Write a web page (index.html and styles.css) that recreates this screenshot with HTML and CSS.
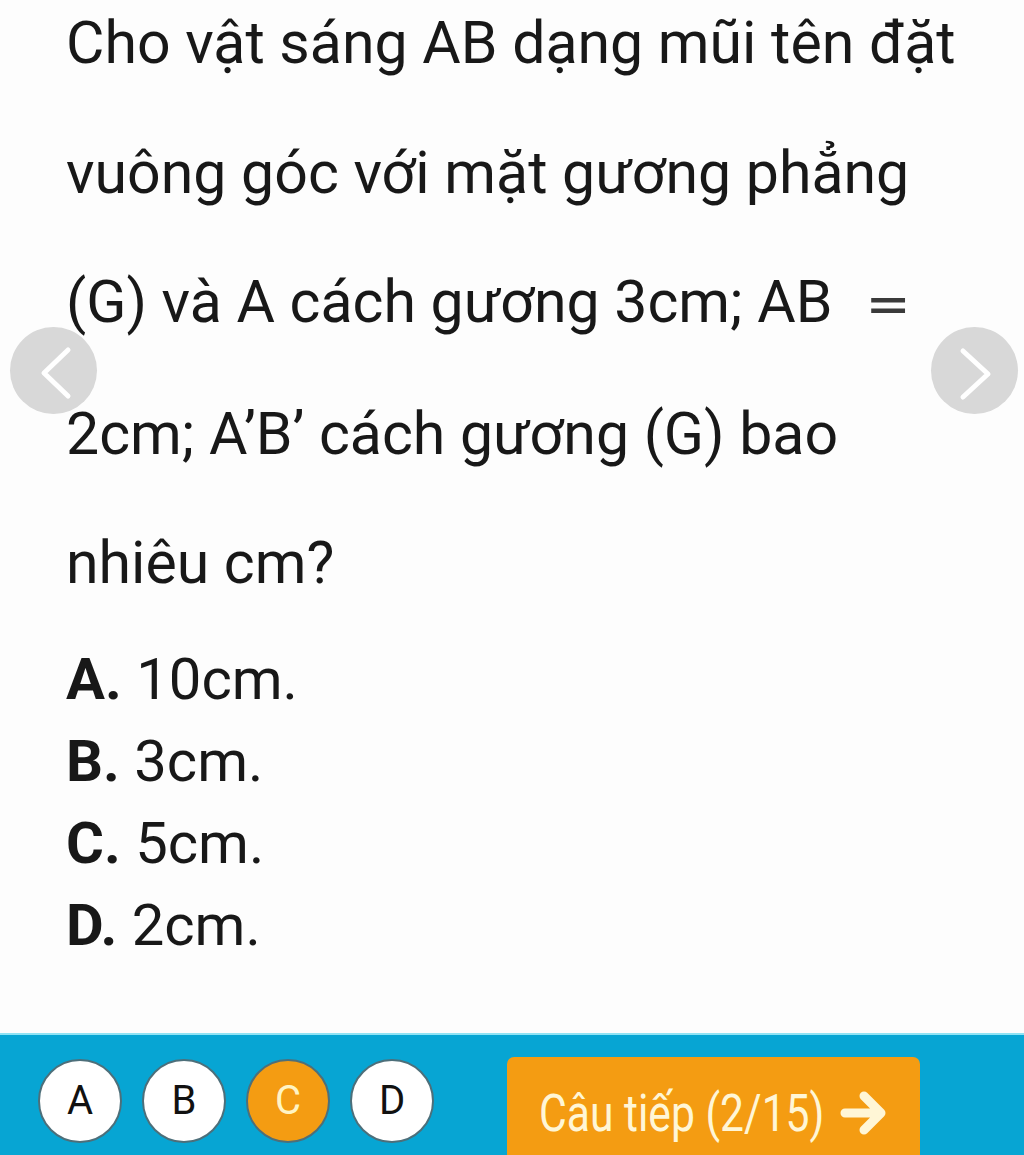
FILE: index.html
```html
<!DOCTYPE html>
<html lang="vi">
<head>
    <meta charset="UTF-8">
    <meta name="viewport" content="width=device-width, initial-scale=1.0">
    <title>Câu hỏi trắc nghiệm</title>
    <link rel="stylesheet" href="styles.css">
</head>
<body>
    <div class="quiz">
        <p class="question">
            Cho vật sáng AB dạng mũi tên đặt<br>
            vuông góc với mặt gương phẳng<br>
            (G) và A cách gương 3cm; AB<span class="eq">=</span><br>
            2cm; A’B’ cách gương (G) bao<br>
            nhiêu cm?
        </p>

        <ul class="answers">
            <li><b>A.</b> 10cm.</li>
            <li><b>B.</b> 3cm.</li>
            <li><b>C.</b> 5cm.</li>
            <li><b>D.</b> 2cm.</li>
        </ul>

        <button class="nav-btn prev" aria-label="Câu trước">
            <svg viewBox="0 0 87 87" width="87" height="87"><polyline points="58,23 34,46 58,69"/></svg>
        </button>
        <button class="nav-btn next" aria-label="Câu sau">
            <svg viewBox="0 0 87 87" width="87" height="87"><polyline points="32,24 57,47 32,70"/></svg>
        </button>
    </div>

    <div class="answer-bar">
        <div class="choices">
            <span class="choice">A</span>
            <span class="choice">B</span>
            <span class="choice selected">C</span>
            <span class="choice">D</span>
        </div>
        <button class="next-question">
            <span class="label">Câu tiếp (2/15)</span>
            <svg class="arrow" viewBox="0 0 48 48" width="48" height="48"><path d="M5 24 H40 M24 7 L41 24 L24 41"/></svg>
        </button>
    </div>
</body>
</html>
```

FILE: styles.css
```css
* {
    box-sizing: border-box;
    margin: 0;
    padding: 0;
}

body {
    font-family: Roboto, 'Noto Sans', sans-serif;
    background-color: #fdfdfd;
    color: #181818;
    overflow: hidden;
}

.quiz {
    position: relative;
    display: flow-root;
    padding-left: 66px;
}

.question {
    font-size: 59px;
    line-height: 129.5px;
    margin-top: -22px;
    white-space: nowrap;
}

.eq {
    margin-left: 33px;
    font-family: 'DejaVu Sans', sans-serif;
    font-size: 54px;
    color: #3a3a3a;
}

.answers {
    list-style: none;
    font-size: 58px;
    line-height: 82px;
    margin-top: 10px;
}

.answers b {
    font-weight: 700;
}

.nav-btn {
    position: absolute;
    top: 327px;
    width: 87px;
    height: 87px;
    border: none;
    border-radius: 50%;
    background-color: rgba(200, 200, 200, 0.7);
    display: flex;
}

.nav-btn.prev {
    left: 10px;
}

.nav-btn.next {
    left: 931px;
}

.nav-btn polyline {
    fill: none;
    stroke: #fff;
    stroke-width: 5;
    stroke-linecap: round;
    stroke-linejoin: round;
}

.answer-bar {
    margin-top: 67px;
    height: 140px;
    background-color: #07a5d3;
    border-top: 2px solid #8fe3f4;
    display: flex;
    align-items: flex-start;
    padding: 22px 0 0 38px;
}

.choices {
    display: flex;
    gap: 20px;
    padding-top: 2px;
}

.choice {
    width: 84px;
    height: 84px;
    border-radius: 50%;
    background-color: #fff;
    border: 2px solid #4d6f7a;
    display: flex;
    align-items: center;
    justify-content: center;
    font-size: 40px;
    color: #111;
}

.choice.selected {
    background-color: #f49c12;
    color: #fff4c4;
}

.next-question {
    margin-left: 73px;
    width: 413px;
    height: 112px;
    border: none;
    border-radius: 7px;
    background-color: #f49c12;
    color: #fff6d6;
    font-family: Roboto, sans-serif;
    display: flex;
    align-items: center;
    padding: 0 0 0 32px;
}

.next-question .label {
    font-size: 52px;
    display: inline-block;
    transform: scaleX(0.82);
    transform-origin: left center;
    width: 287px;
    white-space: nowrap;
    padding-top: 2px;
}

.next-question .arrow {
    margin-left: 14px;
}

.next-question .arrow path {
    fill: none;
    stroke: #fff6d6;
    stroke-width: 9;
    stroke-linecap: round;
    stroke-linejoin: round;
}
```
